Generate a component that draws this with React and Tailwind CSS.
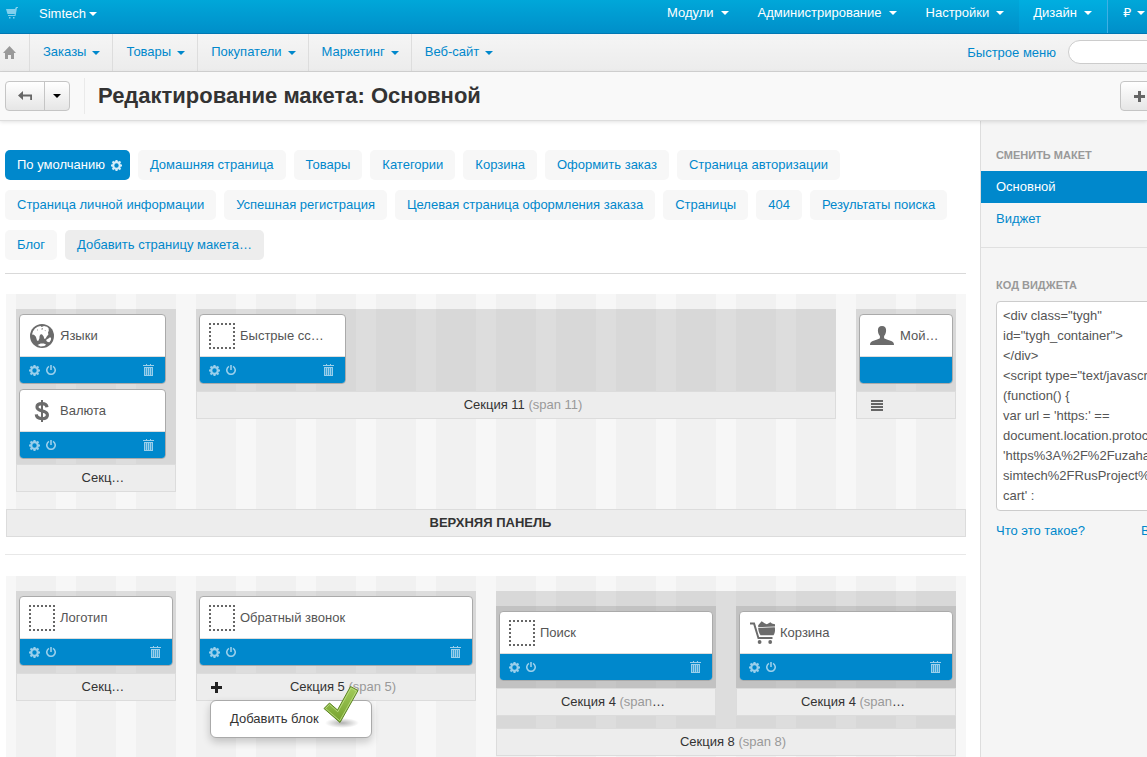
import React from 'react';

const Caret = ({ className = '' }) => (
  <span aria-hidden="true" className={`inline-block h-0 w-0 border-x-4 border-t-4 border-x-transparent ${className}`} />
);

const Gear = ({ className = '' }) => (
  <svg viewBox="0 0 10 10" className={className} aria-hidden="true">
    <circle cx="5" cy="5" r="3" fill="none" stroke="currentColor" strokeWidth="2" />
    <path
      d="M5 0v2M5 8v2M0 5h2M8 5h2M1.4 1.4l1.3 1.3M7.3 7.3l1.3 1.3M8.6 1.4L7.3 2.7M2.7 7.3L1.4 8.6"
      stroke="currentColor"
      strokeWidth="1.9"
    />
  </svg>
);

const Power = () => (
  <svg viewBox="0 0 10 10" className="h-2.5 w-2.5" fill="none" stroke="currentColor" strokeWidth="1.6" aria-hidden="true">
    <path d="M3 1.4A4.2 4.2 0 1 0 7 1.4M5 0v5" />
  </svg>
);

const Trash = () => (
  <svg viewBox="0 0 11 12" className="h-3 w-[11px]" aria-hidden="true">
    <path d="M0 1h11v1H0zM3 0h1v1H3zM7 0h1v1H7zM1 3h9v9H1z" fill="currentColor" />
    <path d="M2.5 4v7M4.5 4v7M6.5 4v7M8.5 4v7" stroke="#0088cc" strokeWidth="0.6" />
  </svg>
);

const Plus = ({ className = '' }) => (
  <svg viewBox="0 0 11 11" className={`h-[11px] w-[11px] shrink-0 ${className}`} aria-hidden="true">
    <path d="M4 0h3v4h4v3H7v4H4V7H0V4h4z" fill="currentColor" />
  </svg>
);

const icons = {
  box: (
    <svg viewBox="0 0 26 26" className="h-[26px] w-[26px]" aria-hidden="true">
      <path d="M0 1h26M0 25h26M1 0v26M25 0v26" stroke="#666" strokeWidth="2" strokeDasharray="2 2" />
    </svg>
  ),
  globe: (
    <svg viewBox="0 0 24 24" className="h-6 w-6" aria-hidden="true">
      <circle cx="12" cy="12" r="12" fill="#6b6b6b" />
      <path
        d="M2 10.500l1-3.300L5 4.600l2.600-1.800 2.800-.7 1.300.8L14 2l3 .8 1.600 1.400.2 2.600-.8 1.700.4 2-1.500 1.700-1.300 2.300-1.200.4-.9-2.600-1.600-2.100-1.500.3-.8 1.600-.2 2.300L8.200 17l-1.200-.6L5.900 12.800 4 10.800z"
        fill="#fff"
      />
      <path d="M16.300 15.800l2.500-1.600 1.200-.9 1.100.6-.2 2.200-1.500 2.100-1.600-.2-1.400-1.100zM7.500 21l3.200-1.500 3.200.1 2.300 1.200-1.900 1.300-3.600.3z" fill="#fff" />
      <path d="M11.200 4.700l1.500-.5.5.9-1.400.7zM7 5.600l1.200.2-.8.9zM14.600 6.200l1.300.3-.8.8z" fill="#6b6b6b" />
    </svg>
  ),
  dollar: (
    <svg viewBox="0 0 16 22" className="h-[22px] w-4" fill="none" stroke="#6b6b6b" aria-hidden="true">
      <path d="M13 7.2C12.7 4.8 10.7 3.6 8 3.6c-2.9 0-5 1.2-5 3.5 0 2.5 2.2 3.1 5 3.8 3 .7 5.4 1.5 5.4 4 0 2.4-2.2 3.7-5.4 3.7-3.200 0-5.500-1.400-5.700-4.200" strokeWidth="3.2" />
      <path d="M8 0v22" strokeWidth="2" />
    </svg>
  ),
  user: (
    <svg viewBox="0 0 24 19" className="h-[19px] w-6" aria-hidden="true">
      <path d="M12 0c2.8 0 4.3 1.8 4.1 4.6-.1 2.4-.9 4.3-2 5.500v2.200c1.500 1.300 5.200 1.700 7.700 2.900 1.600.8 2.200 1.900 2.200 3.800H0c0-1.900.6-3 2.200-3.800 2.500-1.200 6.200-1.600 7.700-2.900v-2.200c-1.100-1.200-1.900-3.100-2-5.500C7.700 1.800 9.200 0 12 0z" fill="#6b6b6b" />
    </svg>
  ),
  cart: (
    <svg viewBox="-1 0 26 23" className="h-[23px] w-[26px]" fill="#6b6b6b" aria-hidden="true">
      <path d="M0 1.500h4.800l4.300 14.500H22.500v2H7.700L3.300 3.400H0z" />
      <path d="M8.200 7l16.600-.8c.5 2.800.2 6-1.300 8H10.500C9 12 8.300 9.500 8.200 7z" />
      <path d="M8.200 4.200L11.600.2l3.400 2.200 1.900.9 3.500-2 1.500 1.200 3.100.7v2.300L8.200 6.300z" />
      <circle cx="9.600" cy="21" r="1.900" />
      <circle cx="20.200" cy="21" r="1.900" />
    </svg>
  ),
};

function Block({ icon, title, empty }) {
  return (
    <article className="overflow-hidden rounded border border-[#aaa] bg-white">
      <div className="flex h-[42px] items-center border-b border-[#ddd] pl-[9px]">
        <span className="flex w-[26px] shrink-0 justify-center">{icons[icon]}</span>
        <h3 className="ml-[5px] text-[#555]">{title}</h3>
      </div>
      <div className="flex h-[26px] items-center gap-[6px] bg-[#0088cc] pr-[11px] pl-[9px] text-[#9acfeb]">
        {!empty && (
          <>
            <button aria-label="Настройки блока"><Gear className="h-[11px] w-[11px]" /></button>
            <button aria-label="Включить"><Power /></button>
            <button aria-label="Удалить" className="ml-auto"><Trash /></button>
          </>
        )}
      </div>
    </article>
  );
}

const Label = ({ children, left }) => (
  <div className="flex h-7 items-center border border-[#dcdcdc] bg-[#ededed] pl-3.5 text-[#333]">
    {left}
    <span className="flex-1 text-center">{children}</span>
  </div>
);

function Section({ className, body = '', label, left, children }) {
  return (
    <section className={className}>
      <div className={`flex min-h-[82px] flex-col gap-[5px] bg-black/10 py-[5px] pl-[3px] ${body || 'pr-[3px]'}`}>{children}</div>
      <Label left={left}>{label}</Label>
    </section>
  );
}

const Span = ({ children }) => <span className="text-[#999]">{children}</span>;

const Grid = ({ children }) => (
  <div className="ml-px grid min-h-[215px] grid-cols-[repeat(16,minmax(0,1fr))] items-start gap-x-5 bg-[#f7f7f7] bg-[linear-gradient(90deg,transparent_10px,#f1f1f1_10px,#f1f1f1_calc(100%-10px),transparent_calc(100%-10px))] bg-[size:6.25%_100%] px-2.5 pt-[15px] pb-[17px]">
    {children}
  </div>
);

const topMenu = ['Модули', 'Администрирование', 'Настройки'];
const navMenu = ['Заказы', 'Товары', 'Покупатели', 'Маркетинг', 'Веб-сайт'];
const pages = [
  'Домашняя страница', 'Товары', 'Категории', 'Корзина', 'Оформить заказ', 'Страница авторизации',
  'Страница личной информации', 'Успешная регистрация', 'Целевая страница оформления заказа', 'Страницы',
  '404', 'Результаты поиска', 'Блог',
];
const code = `<div class="tygh"
id="tygh_container">
</div>
<script type="text/javascript">
(function() {
var url = 'https:' ==
document.location.protocol ?
'https%3A%2F%2Fuzahariev.
simtech%2FRusProject%2F
cart' :`;

export default function App() {
  return (
    <div className="flex h-screen flex-col overflow-hidden bg-white font-['Liberation_Sans',Arial,sans-serif] text-[13px] leading-5 text-[#333]">
      <header className="flex h-[34px] shrink-0 border-b border-[#0077b3] bg-linear-to-b from-[#00a7d9] to-[#008fc9] text-white [text-shadow:0_-1px_0_rgba(0,0,0,0.25)]">
        <a href="#store" aria-label="Корзина" className="mt-[7px] ml-[6px] text-[#80d0ed]">
          <svg viewBox="0 0 12 12" className="h-3 w-3" fill="currentColor" aria-hidden="true">
            <path d="M0 2h9l1-2h2v1h-1L9.500 9H2V8h6.500l.3-1H1.500z" />
            <path d="M3 10h1.500v1.500H3zM7 10h1.500v1.500H7z" />
          </svg>
        </a>
        <button className="ml-[21px] flex h-7 items-center gap-[3px]">Simtech<Caret className="border-t-white" /></button>
        <nav className="ml-auto flex">
          {topMenu.map((t) => (
            <button key={t} className="flex items-start gap-[7px] pr-[15px] pl-3.5">
              <span className="py-[3px]">{t}</span><Caret className="mt-[11px] border-t-white" />
            </button>
          ))}
          <button className="flex items-start gap-[7px] border-r border-[#40b0e4] bg-linear-to-b from-[#00aee0] to-[#0098d2] pr-[15px] pl-3.5">
            <span className="py-[3px]">Дизайн</span><Caret className="mt-[11px] border-t-white" />
          </button>
          <button className="flex w-[39px] items-start gap-[6px] pl-[15px]">
            <span className="py-[3px] font-['DejaVu_Sans',sans-serif]">₽</span><Caret className="mt-[11px] shrink-0 border-t-white" />
          </button>
        </nav>
      </header>

      <div className="flex h-[38px] shrink-0 items-stretch border-b border-[#d4d4d4] bg-linear-to-b from-[#f5f5f5] to-[#ececec] text-[#0088cc]">
        <a href="#home" aria-label="Главная" className="flex w-[30px] items-center border-r border-[#ddd] pl-[3px] text-[#999]">
          <svg viewBox="0 0 13 13" className="h-[13px] w-[13px]" fill="currentColor" aria-hidden="true">
            <path d="M6.500 0L13 7h-2v6H8V9H5v4H2V7H0z" />
          </svg>
        </a>
        <nav className="flex">
          {navMenu.map((t) => (
            <button key={t} className="flex items-start gap-[6px] border-r border-[#ddd] pr-3 pl-[13px] last:border-0">
              <span className="py-2">{t}</span><Caret className="mt-[17px] border-t-[#0088cc]" />
            </button>
          ))}
        </nav>
        <a href="#quick" className="ml-auto self-center">Быстрое меню</a>
        <div className="ml-3 flex w-[79px] items-start overflow-hidden pt-[6px]">
          <input aria-label="Поиск" className="h-6 w-44 shrink-0 rounded-full border border-[#ccc] bg-white px-3 outline-none" />
        </div>
      </div>

      <div className="z-10 flex h-[49px] shrink-0 items-center border-b border-[#ddd] bg-[#f9f9f9] pl-[5px] shadow-[0_1px_4px_rgba(0,0,0,0.12)]">
        <div className="flex h-[30px] overflow-hidden rounded border border-[#c5c5c5] bg-linear-to-b from-white to-[#e6e6e6]">
          <button aria-label="Назад" className="flex w-[39px] items-center justify-center border-r border-[#c5c5c5]">
            <svg viewBox="0 0 14 10" className="h-2.5 w-3.5" fill="#666" aria-hidden="true">
              <path d="M0 4.500L5 0v3.500h9V9h-1.800V5.500H5V9z" />
            </svg>
          </button>
          <button aria-label="Ещё" className="flex w-6 items-center justify-center"><Caret className="border-t-black" /></button>
        </div>
        <div className="mr-[13px] ml-3.5 h-9 w-px bg-[#eaeaea]" />
        <h1 className="text-[22px] font-bold">Редактирование макета: Основной</h1>
        <div className="ml-auto w-[27px] overflow-hidden">
          <button aria-label="Добавить" className="flex h-[30px] w-11 items-center rounded border border-[#c5c5c5] bg-linear-to-b from-white to-[#e6e6e6] pl-[13px] text-[#666]">
            <Plus />
          </button>
        </div>
      </div>

      <div className="flex min-h-0 flex-1">
        <main className="min-w-0 flex-1 pt-[29px] pr-3.5 pl-[5px]">
          <div className="flex flex-wrap gap-x-2 gap-y-2.5 border-b border-[#d9d9d9] pb-[13px] text-[#0088cc]">
            <button className="flex h-[30px] items-center gap-1.5 rounded-[5px] bg-[#0088cc] pr-2 pl-3 text-white">
              По умолчанию<Gear className="h-[11px] w-[11px] text-[#d5edf9]" />
            </button>
            {pages.map((p) => (
              <a key={p} href="#page" className="rounded-[5px] bg-[#f7f7f7] px-3 py-[5px]">{p}</a>
            ))}
            <button className="rounded-[5px] bg-[#ededed] px-3 py-[5px]">Добавить страницу макета…</button>
          </div>

          <div className="mt-5 border-b border-[#e8e8e8] pb-[17px]">
            <Grid>
              <Section className="col-span-3" body="pr-2.5" label="Секц…">
                <Block icon="globe" title="Языки" />
                <Block icon="dollar" title="Валюта" />
              </Section>
              <Section className="col-span-11" body="pr-[490px]" label={<>Секция 11 <Span>(span 11)</Span></>}>
                <Block icon="box" title="Быстрые сс…" />
              </Section>
              <Section
                className="col-span-2"
                label=""
                left={
                  <svg viewBox="0 0 12 11" className="h-[11px] w-3 shrink-0" aria-hidden="true">
                    <path d="M0 0h12v2H0zM0 3h12v2H0zM0 6h12v2H0zM0 9h12v2H0z" fill="#666" />
                  </svg>
                }
              >
                <Block icon="user" title="Мой…" empty />
              </Section>
            </Grid>
            <h2 className="ml-px flex h-7 items-center justify-center border border-[#dcdcdc] bg-[#ededed] pl-[9px] font-bold">ВЕРХНЯЯ ПАНЕЛЬ</h2>
          </div>

          <div className="mt-[21px]">
            <Grid>
              <Section className="col-span-3" label="Секц…">
                <Block icon="box" title="Логотип" />
              </Section>
              <div className="relative col-span-5">
                <Section
                  label={<>Секция 5 <Span>(span 5)</Span></>}
                  left={<button aria-label="Добавить в секцию" className="-mr-[11px]"><Plus className="text-[#222]" /></button>}
                >
                  <Block icon="box" title="Обратный звонок" />
                </Section>
                <div className="absolute top-[109px] left-3.5 z-20 w-[162px] rounded-md border border-[#aaa] bg-white shadow-[0_4px_8px_rgba(0,0,0,0.2)]">
                  <button className="w-full py-2 pl-[19px] text-left">Добавить блок</button>
                  <svg viewBox="0 0 36 44" className="absolute -top-4 right-3 h-11 w-9" aria-hidden="true">
                    <defs>
                      <linearGradient id="tick" x1="0" y1="0" x2="0" y2="1">
                        <stop offset="0" stopColor="#a3cc5c" />
                        <stop offset="1" stopColor="#74a02c" />
                      </linearGradient>
                      <radialGradient id="tickShadow">
                        <stop offset="0" stopColor="#000" stopOpacity="0.3" />
                        <stop offset="1" stopColor="#000" stopOpacity="0" />
                      </radialGradient>
                    </defs>
                    <ellipse cx="19" cy="38" rx="17" ry="5" fill="url(#tickShadow)" />
                    <path d="M1 23.500L6.500 18l8 7L27.500 1.500l7.500 4L17 37.500z" fill="url(#tick)" stroke="#5c8424" strokeWidth="1" strokeLinejoin="round" />
                    <path d="M2.500 23.500l4-4 8.300 7.300L28 3l5.500 3L16.800 35.700z" fill="none" stroke="#bfdf86" strokeWidth="0.8" />
                  </svg>
                </div>
              </div>
              <section className="col-span-8">
                <div className="grid grid-cols-2 gap-5 bg-black/10 pt-[15px] pb-3">
                  <Section label={<>Секция 4 <Span>(span</Span>…</>}>
                    <Block icon="box" title="Поиск" />
                  </Section>
                  <Section label={<>Секция 4 <Span>(span</Span>…</>}>
                    <Block icon="cart" title="Корзина" />
                  </Section>
                </div>
                <Label>Секция 8 <Span>(span 8)</Span></Label>
              </section>
            </Grid>
          </div>
        </main>

        <aside className="w-[167px] shrink-0 overflow-hidden border-l border-[#ddd] bg-[#f5f5f5] text-[#0088cc]">
          <h2 className="px-[15px] pt-6 pb-[6px] text-[11px] font-bold text-[#999]">СМЕНИТЬ МАКЕТ</h2>
          <nav>
            <a href="#main" className="block bg-[#0088cc] px-[15px] py-[6px] text-white">Основной</a>
            <a href="#widget" className="block px-[15px] py-[6px]">Виджет</a>
          </nav>
          <div className="mt-3 border-t border-[#e0e0e0] shadow-[inset_0_1px_0_#fff]" />
          <h2 className="px-[15px] pt-[27px] pb-[6px] text-[11px] font-bold text-[#999]">
            <label htmlFor="code">КОД ВИДЖЕТА</label>
          </h2>
          <textarea
            id="code"
            readOnly
            defaultValue={code}
            className="ml-[15px] block h-[210px] w-[210px] resize-none overflow-hidden rounded border border-[#ccc] bg-white px-[6px] py-1 whitespace-pre text-[#555]"
          />
          <div className="mt-2.5 flex w-[240px] gap-14 pl-[15px]">
            <a href="#what">Что это такое?</a>
            <a href="#select">Выделить</a>
          </div>
        </aside>
      </div>
    </div>
  );
}
